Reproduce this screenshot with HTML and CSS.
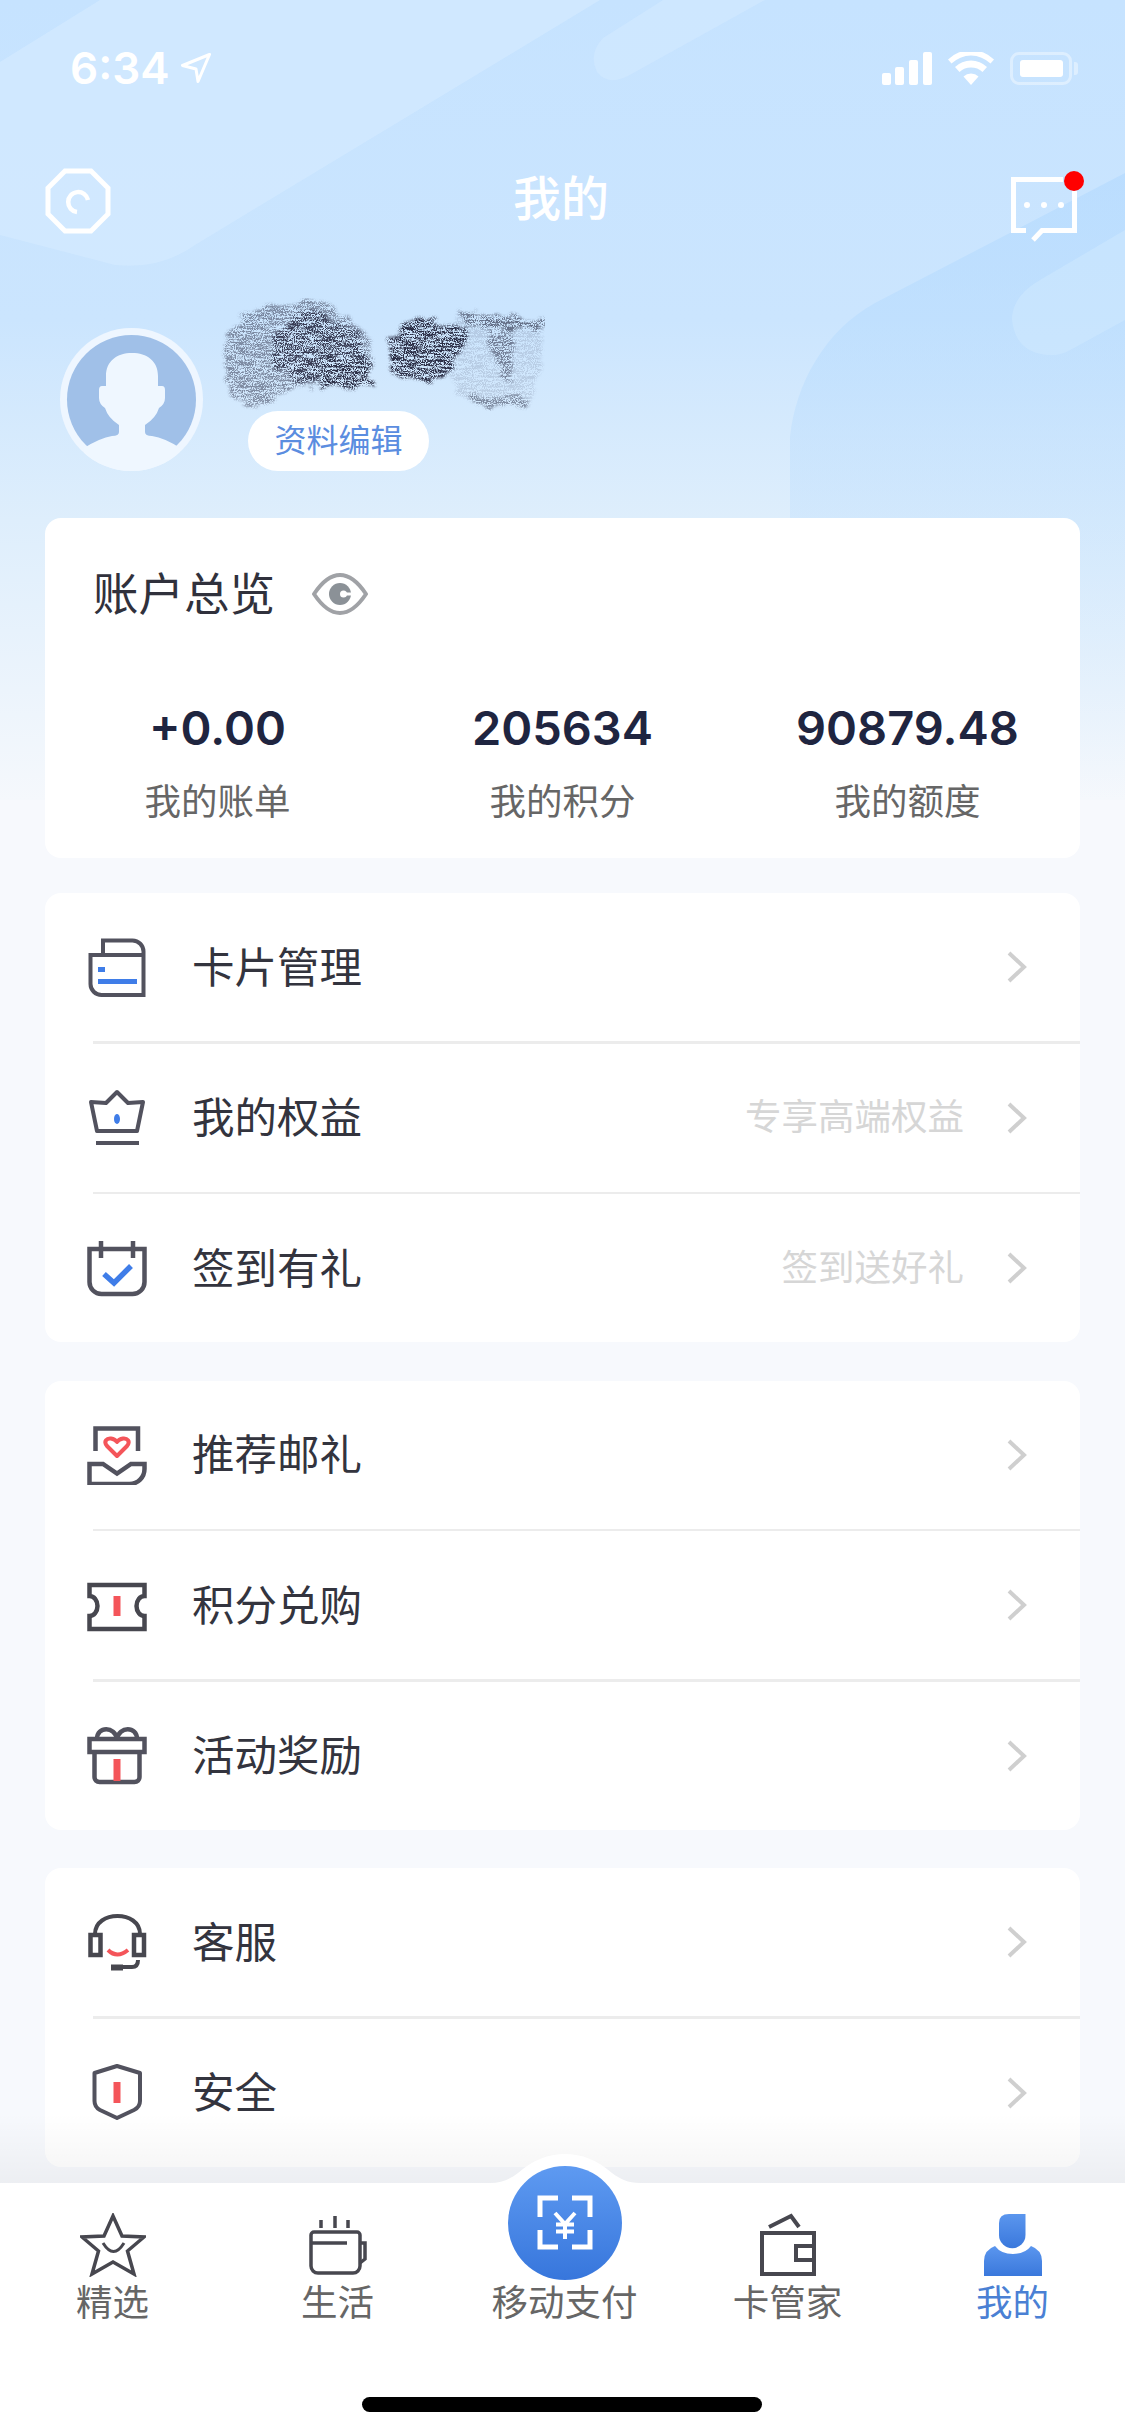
FILE: index.html
```html
<!DOCTYPE html>
<html lang="zh-CN">
<head>
  <meta charset="UTF-8" />
  <meta name="viewport" content="width=device-width, initial-scale=1.0"/>
  <title>我的</title>
  <link rel="stylesheet" href="styles.css">
</head>
<body>
  <div class="phone">
    <!-- Header backdrop with the soft diagonal shapes -->
    <svg class="backdrop" viewBox="0 0 1125 800" xmlns="http://www.w3.org/2000/svg">
      <defs>
        <linearGradient id="skyGrad" x1="0" y1="0" x2="0" y2="1">
          <stop offset="0" stop-color="#c6e3ff"/>
          <stop offset="0.4" stop-color="#cbe5fe"/>
          <stop offset="0.65" stop-color="#deeefc"/>
          <stop offset="1" stop-color="#f5f8fc"/>
        </linearGradient>
        <linearGradient id="hillGrad" gradientUnits="userSpaceOnUse" x1="0" y1="173" x2="0" y2="800">
          <stop offset="0" stop-color="#b2d9fe" stop-opacity="0.6"/>
          <stop offset="0.55" stop-color="#b6dbfe" stop-opacity="0.3"/>
          <stop offset="1" stop-color="#b6dbfe" stop-opacity="0"/>
        </linearGradient>
      </defs>
      <rect width="1125" height="800" fill="url(#skyGrad)"/>
      <path d="M0 62L100 0H600L195 245Q160 270 115 265L0 235Z" fill="#d3eaff" opacity="0.75"/>
      <path d="M663 0H765L628 76Q608 86 597 72Q588 54 603 38Z" fill="#d6ebff" opacity="0.5"/>
      <path d="M1125 173V800H790V437C795 385 825 330 875 303Z" fill="url(#hillGrad)"/>
      <path d="M1125 230L1040 280Q1012 296 1012 320Q1016 355 1052 355Q1062 355 1072 349L1125 320Z" fill="#d3eaff" opacity="0.45"/>
    </svg>

    <div class="status-bar">
      <div class="status-time">
        <span>6:34</span>
        <svg width="30" height="30" viewBox="0 0 30 30"><path d="M28.500 1.500L1.500 12.500L15 16L17 28.500Z" fill="none" stroke="#fff" stroke-width="3" stroke-linejoin="round"/></svg>
      </div>
      <div class="status-icons">
        <svg width="50" height="33" viewBox="0 0 50 33" fill="#fff">
          <rect x="0" y="21" width="9" height="12" rx="2"/>
          <rect x="13" y="15" width="9" height="18" rx="2"/>
          <rect x="27" y="8" width="9" height="25" rx="2"/>
          <rect x="41" y="0" width="9" height="33" rx="2"/>
        </svg>
        <svg width="46" height="33" viewBox="0 0 46 33" fill="#fff">
          <path d="M23 33L15.500 24.500A11 11 0 0 1 30.500 24.500Z"/>
          <path d="M11.500 20L7 15A23 23 0 0 1 39 15L34.500 20A17 17 0 0 0 11.500 20Z"/>
          <path d="M3.500 11.500L0 7.500A33 33 0 0 1 46 7.500L42.500 11.500A28 28 0 0 0 3.500 11.500Z"/>
        </svg>
        <div class="battery"><div class="battery-level"></div></div>
      </div>
    </div>

    <div class="nav-bar">
      <svg class="nav-icon" width="66" height="66" viewBox="0 0 66 66" fill="none" stroke="#fff" stroke-width="5" stroke-linejoin="miter">
        <path d="M20 3H46L63 20V46L46 63H20L3 46V20Z"/>
        <path d="M43 32A10 10 0 1 0 32 44" stroke-width="4.500"/>
      </svg>
      <h1 class="nav-title">我的</h1>
      <div class="msg-button">
        <svg class="nav-icon" width="66" height="66" viewBox="0 0 66 66" fill="none" stroke="#fff" stroke-width="5">
          <path d="M52 2.500H2.500V53.500H15"/>
          <path d="M63.500 14V53.500H31L22 63"/>
          <circle cx="16" cy="28" r="3" fill="#fff" stroke="none"/>
          <circle cx="33" cy="28" r="3" fill="#fff" stroke="none"/>
          <circle cx="50" cy="28" r="3" fill="#fff" stroke="none"/>
        </svg>
        <span class="msg-dot"></span>
      </div>
    </div>

    <div class="profile">
      <svg class="avatar" width="143" height="143" viewBox="0 0 143 143">
        <defs><clipPath id="avatarClip"><circle cx="71.500" cy="71.500" r="71.500"/></clipPath></defs>
        <circle cx="71.500" cy="71.500" r="71.500" fill="#eef6ff"/>
        <circle cx="71.500" cy="71.500" r="64.500" fill="#a0c0e8"/>
        <g clip-path="url(#avatarClip)" fill="#eff7ff">
          <path d="M46 58V48C46 33 57 25 72 25C87 25 98 33 98 48V58H102Q105 58 105 62V70Q105 76 99 80Q96 90 85 97V104Q85 108 92 108Q105 110 120 120V143H24V120Q40 110 52 108Q59 108 59 104V97Q48 90 45 80Q39 76 39 70V62Q39 58 42 58Z"/>
        </g>
      </svg>
      <div class="profile-info">
        <!-- Pencil scribble over the name -->
        <svg class="scribble" width="325" height="113" viewBox="0 0 325 113">
          <defs>
            <filter id="grain" x="-5%" y="-5%" width="110%" height="110%" color-interpolation-filters="sRGB">
              <feTurbulence type="fractalNoise" baseFrequency="0.05 0.09" numOctaves="3" seed="7" result="warp"/>
              <feDisplacementMap in="SourceGraphic" in2="warp" scale="16" xChannelSelector="R" yChannelSelector="G" result="rough"/>
              <feGaussianBlur in="rough" stdDeviation="1.500" result="soft"/>
              <feTurbulence type="fractalNoise" baseFrequency="1.1 0.9" numOctaves="2" seed="4" result="fine"/>
              <feTurbulence type="fractalNoise" baseFrequency="0.06 0.5" numOctaves="2" seed="9" result="streak"/>
              <feComposite in="fine" in2="streak" operator="arithmetic" k1="0" k2="0.75" k3="0.45" k4="0" result="mix"/>
              <feColorMatrix in="mix" type="matrix" values="0 0 0 0 0  0 0 0 0 0  0 0 0 0 0  0 0 0 6 -3.100" result="speck"/>
              <feComposite in="soft" in2="speck" operator="in"/>
              <feGaussianBlur stdDeviation="0.300"/>
            </filter>
          </defs>
          <g filter="url(#grain)" fill="#2b2e45">
            <path d="M27 14L87 2L113 12L150 35L152 87L77 89L33 110L13 99L3 59L10 35Z" opacity="0.5"/>
            <path d="M53 39L87 9L140 35L150 85L77 85L53 69Z" opacity="0.85"/>
            <path d="M110 62L150 66L152 87L100 88Z"/>
            <path d="M197 17L250 32L227 82L170 79L170 42Z"/>
            <path d="M240 12L323 22L323 65L307 109L250 107L220 65Z" opacity="0.14"/>
            <path d="M240 12L323 22L323 32L247 29Z" opacity="0.6"/>
            <path d="M267 32L293 32L290 85L282 85Z" opacity="0.5"/>
            <path d="M250 99L307 97L307 109L250 107Z" opacity="0.45"/>
          </g>
        </svg>
        <div class="edit-pill">资料编辑</div>
      </div>
    </div>

    <section class="card overview">
      <div class="overview-head">
        <span class="overview-title">账户总览</span>
        <svg width="56" height="42" viewBox="0 0 56 42">
          <path d="M2 21C10 9 18 2 28 2C38 2 46 9 54 21C46 33 38 40 28 40C18 40 10 33 2 21Z" fill="none" stroke="#a0a2a6" stroke-width="4" stroke-linejoin="round"/>
          <circle cx="28" cy="21" r="11" fill="#8b9197"/>
          <circle cx="31.500" cy="21" r="3.500" fill="#fff"/>
          <rect x="32" y="19.500" width="8" height="3" fill="#fff"/>
        </svg>
      </div>
      <div class="stats">
        <div class="stat"><div class="stat-value">+0.00</div><div class="stat-label">我的账单</div></div>
        <div class="stat"><div class="stat-value">205634</div><div class="stat-label">我的积分</div></div>
        <div class="stat"><div class="stat-value">90879.48</div><div class="stat-label">我的额度</div></div>
      </div>
    </section>

    <section class="card group">
      <div class="row">
        <svg class="row-icon" viewBox="0 0 60 60" fill="none" stroke="#52525e" stroke-width="4">
          <path d="M16 18V3.500H45.500A11 11 0 0 1 56.500 14.500V58H14.500A11 11 0 0 1 3.500 47V18H56.500"/>
          <rect x="11" y="30" width="7" height="5" fill="#3f7de8" stroke="none"/>
          <rect x="11" y="42" width="39" height="5" fill="#3f7de8" stroke="none"/>
        </svg>
        <span class="row-text">卡片管理</span>
        <svg class="chevron" viewBox="0 0 20 32"><path d="M2 2L17 16L2 30"/></svg>
      </div>
      <div class="divider"></div>
      <div class="row">
        <svg class="row-icon" viewBox="0 0 60 60" fill="none" stroke="#52525e" stroke-width="4" stroke-linejoin="round">
          <path d="M30 4L41 15L56 14L50 43H10L4 14L19 15Z"/>
          <path d="M9 55H52"/>
          <ellipse cx="30" cy="31" rx="3" ry="5" fill="#3f7de8" stroke="none"/>
        </svg>
        <span class="row-text">我的权益</span>
        <span class="row-hint">专享高端权益</span>
        <svg class="chevron" viewBox="0 0 20 32"><path d="M2 2L17 16L2 30"/></svg>
      </div>
      <div class="divider"></div>
      <div class="row">
        <svg class="row-icon" viewBox="0 0 60 60" fill="none" stroke="#52525e" stroke-width="4.500">
          <path d="M2.500 11H57.500V44A12 12 0 0 1 45.500 56H14.500A12 12 0 0 1 2.500 44Z"/>
          <path d="M14 3V20M46 3V20"/>
          <path d="M17 36L27 45L44 28" stroke="#3f7de8" stroke-width="5.500"/>
        </svg>
        <span class="row-text">签到有礼</span>
        <span class="row-hint">签到送好礼</span>
        <svg class="chevron" viewBox="0 0 20 32"><path d="M2 2L17 16L2 30"/></svg>
      </div>
    </section>

    <section class="card group">
      <div class="row">
        <svg class="row-icon" viewBox="0 0 60 60" fill="none" stroke="#52525e" stroke-width="4.500">
          <path d="M8.500 26V3.500H51V26"/>
          <path d="M2.500 39H16L30 48.500L44 39H57.500V44A15 15 0 0 1 42.500 59H2.500Z"/>
          <path d="M30 31L20 21C16 16 20 13 24 13.500C27 14 29 15.500 30 17C31 15.500 33 14 36 13.500C40 13 44 16 40 21Z" stroke="#f4555a" stroke-width="4" stroke-linejoin="round"/>
        </svg>
        <span class="row-text">推荐邮礼</span>
        <svg class="chevron" viewBox="0 0 20 32"><path d="M2 2L17 16L2 30"/></svg>
      </div>
      <div class="divider"></div>
      <div class="row">
        <svg class="row-icon" viewBox="0 0 60 60" fill="none" stroke="#47474f" stroke-width="4.500">
          <path d="M2.500 10H57.500V21A8 10 0 0 0 57.500 41V54H2.500V41A8 10 0 0 0 2.500 21Z"/>
          <rect x="26.500" y="21" width="7" height="20" fill="#f4555a" stroke="none"/>
        </svg>
        <span class="row-text">积分兑购</span>
        <svg class="chevron" viewBox="0 0 20 32"><path d="M2 2L17 16L2 30"/></svg>
      </div>
      <div class="divider"></div>
      <div class="row">
        <svg class="row-icon" viewBox="0 0 60 60" fill="none" stroke="#52525e" stroke-width="4.500">
          <rect x="2.500" y="13" width="55" height="13"/>
          <path d="M7.500 26V51A5 5 0 0 0 12.500 56H47.500A5 5 0 0 0 52.500 51V26"/>
          <path d="M10 13C10 0 28 0 30 13C32 0 50 0 50 13"/>
          <rect x="26.500" y="33" width="7" height="22" fill="#f4555a" stroke="none"/>
        </svg>
        <span class="row-text">活动奖励</span>
        <svg class="chevron" viewBox="0 0 20 32"><path d="M2 2L17 16L2 30"/></svg>
      </div>
    </section>

    <section class="card group">
      <div class="row">
        <svg class="row-icon" viewBox="0 0 60 60" fill="none" stroke="#47474f" stroke-width="4">
          <path d="M8 22C8 -2 53 -2 53 22"/>
          <rect x="3.500" y="23" width="10" height="20" stroke-width="4.500"/>
          <rect x="47" y="23" width="10" height="20" stroke-width="4.500"/>
          <path d="M21 38Q30 47 41 38" stroke="#f4555a" stroke-width="4"/>
          <path d="M51 48Q51 55 45 55H32"/>
          <path d="M24 55.500H36" stroke-width="6"/>
        </svg>
        <span class="row-text">客服</span>
        <svg class="chevron" viewBox="0 0 20 32"><path d="M2 2L17 16L2 30"/></svg>
      </div>
      <div class="divider"></div>
      <div class="row">
        <svg class="row-icon" viewBox="0 0 60 60" fill="none" stroke="#52525e" stroke-width="4" stroke-linejoin="round">
          <path d="M7.500 10L30 3L53 10V38Q53 44 47 47L30 55L13 47Q7.500 44 7.500 38Z"/>
          <rect x="26.500" y="19" width="7" height="21" fill="#f4555a" stroke="none"/>
        </svg>
        <span class="row-text">安全</span>
        <svg class="chevron" viewBox="0 0 20 32"><path d="M2 2L17 16L2 30"/></svg>
      </div>
    </section>

    <!-- Bottom tabs float over the list -->
    <nav class="tab-bar">
      <div class="tab">
        <svg class="tab-icon" width="66" height="64" viewBox="0 0 66 64" fill="none" stroke="#47474f" stroke-width="3.500" stroke-linejoin="miter">
          <path d="M33 3L42 23L64 24L47.500 38L54 61L33 49L12 61L18.500 38L2 24L24 23Z"/>
          <path d="M23 30Q33.500 47 44 30" stroke-width="3"/>
        </svg>
        <span>精选</span>
      </div>
      <div class="tab">
        <svg class="tab-icon" width="58" height="64" viewBox="0 0 58 64" fill="none" stroke="#47474f" stroke-width="3.500">
          <path d="M12 7V15M26 3V15M39 7V15"/>
          <path d="M2 22A3 3 0 0 1 5 19H48A3 3 0 0 1 51 22V53A7 7 0 0 1 44 60H9A7 7 0 0 1 2 53Z"/>
          <path d="M2 30H38"/>
          <path d="M51 30H56V46L51 50"/>
        </svg>
        <span>生活</span>
      </div>
      <div class="tab tab-pay">
        <svg class="tab-bump" width="150" height="29" viewBox="0 0 150 29"><path d="M0 29C12 29 20 25 28 19C43 6 58 0 75 0C92 0 107 6 122 19C130 25 138 29 150 29Z" fill="#fff"/></svg>
        <svg class="pay-button" width="114" height="114" viewBox="0 0 114 114" fill="none" stroke="#fff">
          <defs>
            <linearGradient id="payGrad" x1="0" y1="0" x2="0" y2="1">
              <stop offset="0" stop-color="#5e9af1"/>
              <stop offset="1" stop-color="#3776dc"/>
            </linearGradient>
          </defs>
          <circle cx="57" cy="57" r="57" fill="url(#payGrad)" stroke="none"/>
          <path d="M50 32H32V51M32 64V81H50M64 32H82V51M82 64V81H64" stroke-width="5"/>
          <path d="M47 47L57 58L67 47M57 58V73M48 58.500H66M48 65.500H66" stroke-width="4"/>
        </svg>
        <span>移动支付</span>
      </div>
      <div class="tab">
        <svg class="tab-icon" width="56" height="64" viewBox="0 0 56 64" fill="none" stroke="#47474f" stroke-width="4">
          <path d="M9 14L31 3L39 14"/>
          <rect x="2" y="20" width="52" height="41"/>
          <path d="M54 33H36V47H54"/>
        </svg>
        <span>卡管家</span>
      </div>
      <div class="tab tab-active">
        <svg class="tab-icon" width="58" height="64" viewBox="0 0 58 64">
          <defs>
            <linearGradient id="meGrad" x1="0" y1="0" x2="0" y2="1">
              <stop offset="0" stop-color="#5b96ee"/>
              <stop offset="1" stop-color="#3a78dc"/>
            </linearGradient>
          </defs>
          <path d="M15 10Q15 1 25 1H41.500V22A13.200 13.200 0 0 1 15 22Z" fill="url(#meGrad)"/>
          <path d="M0 63V48Q0 37 11 33Q17 41 29 41Q41 41 47 33Q58 37 58 48V63Z" fill="url(#meGrad)"/>
        </svg>
        <span>我的</span>
      </div>
      <div class="home-bar"></div>
    </nav>
  </div>
</body>
</html>
```

FILE: styles.css
```css
* {
  margin: 0;
  padding: 0;
  box-sizing: border-box;
}

html, body {
  height: 100%;
  font-family: Inter, "Noto Sans CJK SC", sans-serif;
}

.phone {
  position: relative;
  width: 1125px;
  height: 2436px;
  overflow: hidden;
  background-color: #f7f9fd;
}

.backdrop {
  position: absolute;
  top: 0;
  left: 0;
  width: 1125px;
  height: 800px;
}

/* Status bar */
.status-bar {
  position: relative;
  display: flex;
  justify-content: space-between;
  align-items: center;
  height: 136px;
  padding: 0 53px 0 70px;
}

.status-time {
  display: flex;
  align-items: center;
  gap: 12px;
  color: #fff;
  font-size: 44px;
  font-weight: 600;
}

.status-icons {
  display: flex;
  align-items: center;
  gap: 16px;
}

.battery {
  position: relative;
  width: 62px;
  height: 33px;
  padding: 5px 7px;
  border: 3px solid rgba(255, 255, 255, 0.4);
  border-radius: 9px;
}

.battery::after {
  content: "";
  position: absolute;
  top: 7px;
  right: -9px;
  width: 4px;
  height: 13px;
  border-radius: 0 3px 3px 0;
  background-color: rgba(255, 255, 255, 0.4);
}

.battery-level {
  width: 43px;
  height: 100%;
  border-radius: 3px;
  background-color: #fff;
}

/* Title row */
.nav-bar {
  position: relative;
  display: flex;
  justify-content: space-between;
  align-items: center;
  height: 130px;
  padding: 0 48px 0 45px;
}

.nav-icon {
  display: block;
}

.nav-title {
  padding-bottom: 12px;
  color: #fff;
  font-size: 48px;
  font-weight: 500;
}

.msg-button {
  position: relative;
  margin-top: 18px;
}

.msg-dot {
  position: absolute;
  top: -6px;
  right: -7px;
  width: 20px;
  height: 20px;
  border-radius: 50%;
  background-color: #f00;
}

/* Avatar and name */
.profile {
  position: relative;
  display: flex;
  align-items: flex-end;
  gap: 17px;
  height: 252px;
  padding: 0 0 47px 60px;
}

.avatar {
  display: block;
  flex: none;
}

.profile-info {
  display: flex;
  flex-direction: column;
  align-items: flex-start;
}

.scribble {
  display: block;
}

.edit-pill {
  margin-left: 28px;
  padding: 0 26.5px;
  height: 60px;
  line-height: 60px;
  border-radius: 30px;
  background-color: #fff;
  color: #5b8de0;
  font-size: 32px;
}

/* Cards */
.card {
  position: relative;
  margin: 0 45px 38.5px;
  border-radius: 16px;
  background-color: #fff;
}

.overview {
  height: 340px;
  margin-bottom: 35px;
}

.overview-head {
  display: flex;
  align-items: center;
  gap: 37px;
  height: 152px;
  padding-left: 48px;
}

.overview-title {
  padding-bottom: 6px;
  color: #30313c;
  font-size: 45.5px;
}

.stats {
  display: grid;
  grid-template-columns: repeat(3, 1fr);
  padding-top: 30px;
  text-align: center;
}

.stat-value {
  color: #1f2540;
  font-size: 47px;
  font-weight: 600;
  line-height: 56px;
}

.stat-label {
  margin-top: 21px;
  color: #666;
  font-size: 36.5px;
  line-height: 50px;
}

/* List rows */
.row {
  display: flex;
  align-items: center;
  height: 148px;
  padding: 0 53px 0 42px;
}

.row-icon {
  flex: none;
  width: 60px;
  height: 60px;
  margin-right: 45px;
}

.row-text {
  flex: 1;
  padding-bottom: 6px;
  color: #33343e;
  font-size: 42.5px;
}

.row-hint {
  margin-right: 43px;
  padding-bottom: 6px;
  color: #d6d6d6;
  font-size: 36.5px;
}

.chevron {
  flex: none;
  width: 20px;
  height: 32px;
  fill: none;
  stroke: #cfcfcf;
  stroke-width: 4;
}

.divider {
  height: 2.5px;
  margin-left: 48px;
  background-color: #ececec;
}

/* Bottom tabs */
.tab-bar {
  position: absolute;
  left: 0;
  right: 0;
  bottom: 0;
  display: grid;
  grid-template-columns: repeat(5, 1fr);
  height: 253px;
  padding-top: 30px;
  background-color: #fff;
}

.tab-bar::before {
  content: "";
  position: absolute;
  left: 0;
  right: 0;
  top: -70px;
  height: 70px;
  background: linear-gradient(rgba(0, 0, 0, 0), rgba(0, 0, 0, 0.045));
}

.tab {
  display: flex;
  flex-direction: column;
  align-items: center;
  color: #666;
  font-size: 36.5px;
  line-height: 50px;
}

.tab-icon {
  display: block;
  flex: none;
  height: 64px;
}

.tab span {
  margin-top: 1px;
}

.tab-active {
  color: #4a80d4;
}

.tab-pay {
  position: relative;
  padding-top: 64px;
  margin-left: 4px;
}

.tab-bump {
  position: absolute;
  top: -59px;
  left: 50%;
  transform: translateX(-75px);
}

.pay-button {
  position: absolute;
  top: -47px;
  left: 50%;
  transform: translateX(-57px);
}

.home-bar {
  position: absolute;
  left: 362px;
  bottom: 24px;
  width: 400px;
  height: 15px;
  border-radius: 8px;
  background-color: #000;
}
```
